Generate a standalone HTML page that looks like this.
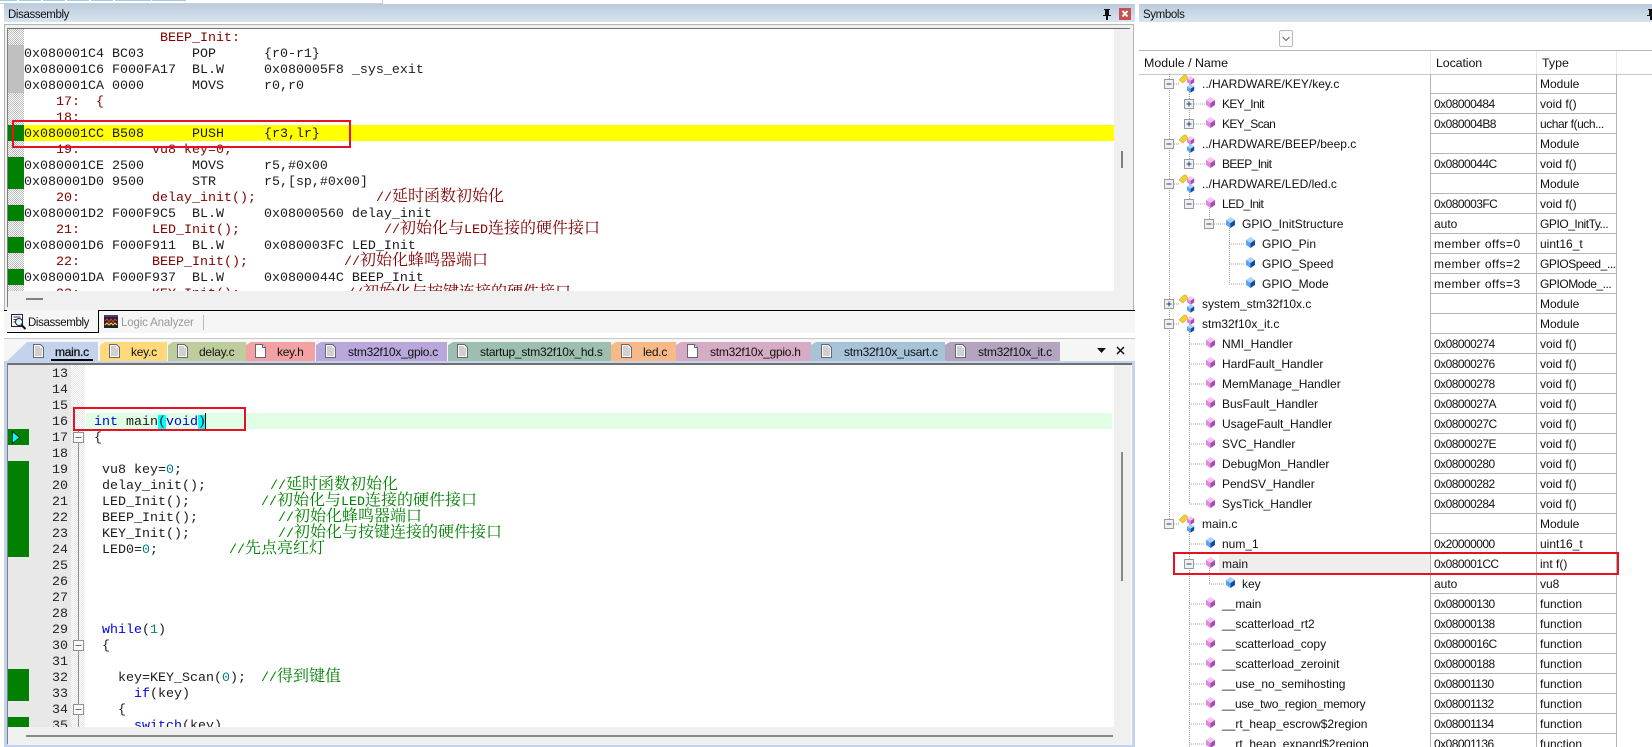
<!DOCTYPE html>
<html><head><meta charset="utf-8"><style>
html,body{margin:0;padding:0;background:#fff;width:1652px;height:747px;overflow:hidden}
body{position:relative;font-family:"Liberation Sans","Noto Sans CJK SC",sans-serif;color:#000}
.a{position:absolute}
.tb{background:linear-gradient(#bccbdb,#d7e4f0);height:18px;top:4px;font-size:11.5px;line-height:22px;letter-spacing:-.38px;color:#111;overflow:hidden}
.d,.e{font-family:"Liberation Mono","Noto Serif CJK SC",monospace;font-size:13.33px}
.d,.e{height:16px;line-height:20px;white-space:pre;position:relative;color:#1a1a1a}
.d{padding-left:16px}
.d:before{content:"";position:absolute;left:0;top:0;width:16px;height:16px}
.h:before{background:repeating-conic-gradient(#b8b8b8 0 25%,#fff 0 50%) 0 0/2px 2px}
.s:before{background:#c0c0c0}
.g:before{background:#008000}
.y{background:#ff0}
.d.r0{color:#800000}
.z{position:absolute;top:-2px;margin-left:-1px;font:16px/16px "Noto Serif CJK SC","Liberation Mono",serif}
.z em{font:normal 13.33px/16px "Liberation Mono",monospace}
.e{padding-left:86px}
.e i{position:absolute;left:0;width:60px;text-align:right;font-style:normal;color:#222}
.k{color:#0000e0}.u{color:#008080}.cm{color:#008000}
.cy{background:#0ff}
.tab{position:absolute;top:342px;height:19px;font-size:12px;line-height:20px;letter-spacing:-.25px;color:#111}
.tab span{position:absolute;top:0;white-space:nowrap}
.tab svg{position:absolute;top:2px}
.tree{position:absolute;left:0;top:74px;width:1617px;font-size:12px;color:#111}
.r{position:relative;height:20px}
.r span{position:absolute;top:0;height:19px;line-height:21px;white-space:nowrap}
.n0{left:1202px}.n1{left:1222px}.n2{left:1242px}.n3{left:1262px}
.r .l,.r .t{height:19px;border-bottom:1px solid #b4b4b4;border-left:1px solid #b4b4b4}
.r .l{left:1430px;width:102px;padding-left:3px;letter-spacing:-.55px}
.r .t{left:1536px;width:76px;padding-left:3px;border-right:1px solid #b4b4b4}
.r .w{letter-spacing:0}.r .w2{letter-spacing:.5px}
.r .q{letter-spacing:-.6px}
.r .tt{letter-spacing:-.45px}
.red{position:absolute;border:2px solid #e81123;box-sizing:border-box}
</style></head><body>

<!-- top strip -->
<div class="a" style="left:0;top:0;width:17px;height:1px;background:#9ccbf2"></div>
<div class="a" style="left:19px;top:0;width:22px;height:1px;background:#9ccbf2"></div>
<div class="a" style="left:43px;top:0;width:22px;height:1px;background:#9ccbf2"></div>
<div class="a" style="left:67px;top:0;width:22px;height:1px;background:#9ccbf2"></div>
<div class="a" style="left:91px;top:0;width:22px;height:1px;background:#9ccbf2"></div>
<div class="a" style="left:115px;top:0;width:36px;height:1px;background:#9ccbf2"></div>
<div class="a" style="left:152px;top:0;width:34px;height:1px;background:#9ccbf2"></div>
<div class="a" style="left:0;top:3px;width:382px;height:1px;background:#d0d0d0"></div>
<div class="a" style="left:382px;top:0;width:1px;height:4px;background:#d0d0d0"></div>

<!-- Disassembly panel -->
<div class="a tb" style="left:4px;width:1131px;"><span style="margin-left:4px">Disassembly</span></div>
<svg class="a" style="left:1100px;top:8px" width="36" height="13" viewBox="0 0 36 13"><path d="M4 1h6v1H9v5h2v1H8v4H6V8H3V7h2V2H4z" fill="#111"/><rect x="19" y="0" width="12" height="12" fill="#c75050"/><path d="M22.500 3l5 5.500M27.500 3l-5 5.500" stroke="#fff" stroke-width="2"/></svg>
<div class="a" style="left:4px;top:24px;width:1130px;height:286px;background:#f0f0f0;border:1px solid #b4b4b4;border-bottom:0;box-sizing:border-box"></div>
<div class="a" style="left:8px;top:28px;width:1122px;height:1px;background:#707070"></div>
<div class="a" style="left:7px;top:28px;width:1px;height:279px;background:#808080"></div>
<div class="a" style="left:8px;top:29px;width:1106px;height:262px;background:#fff;overflow:hidden">
<div class="d h r0">                 BEEP_Init:</div>
<div class="d s">0x080001C4 BC03      POP      {r0-r1}</div>
<div class="d s">0x080001C6 F000FA17  BL.W     0x080005F8 _sys_exit</div>
<div class="d s">0x080001CA 0000      MOVS     r0,r0</div>
<div class="d h r0">    17:  {</div>
<div class="d h r0">    18: </div>
<div class="d g y">0x080001CC B508      PUSH     {r3,lr}</div>
<div class="d h r0">    19:         vu8 key=0;</div>
<div class="d g">0x080001CE 2500      MOVS     r5,#0x00</div>
<div class="d g">0x080001D0 9500      STR      r5,[sp,#0x00]</div>
<div class="d h r0">    20:         delay_init();<span class="z" style="left:369px"><em>//</em>延时函数初始化</span></div>
<div class="d g">0x080001D2 F000F9C5  BL.W     0x08000560 delay_init</div>
<div class="d h r0">    21:         LED_Init();<span class="z" style="left:377px"><em>//</em>初始化与<em>LED</em>连接的硬件接口</span></div>
<div class="d g">0x080001D6 F000F911  BL.W     0x080003FC LED_Init</div>
<div class="d h r0">    22:         BEEP_Init();<span class="z" style="left:337px"><em>//</em>初始化蜂鸣器端口</span></div>
<div class="d g">0x080001DA F000F937  BL.W     0x0800044C BEEP_Init</div>
<div class="d h r0">    23:         KEY_Init();<span class="z" style="left:340px"><em>//</em>初始化与按键连接的硬件接口</span></div>
</div>
<div class="a" style="left:1121px;top:151px;width:2px;height:17px;background:#808080"></div>
<div class="a" style="left:26px;top:298px;width:17px;height:2px;background:#808080"></div>
<div class="red" style="left:12px;top:120px;width:339px;height:28px"></div>

<!-- disassembly tabs -->
<div class="a" style="left:4px;top:310px;width:1131px;height:23px;background:#f6f6f6"></div>
<div class="a" style="left:98px;top:310px;width:1037px;height:1px;background:#000"></div>
<div class="a" style="left:4px;top:310px;width:3px;height:1px;background:#000"></div>
<div class="a" style="left:7px;top:332px;width:92px;height:1px;background:#000"></div>
<div class="a" style="left:98px;top:310px;width:1px;height:23px;background:#000"></div>
<svg class="a" style="left:10px;top:314px" width="17" height="17" viewBox="0 0 17 17"><rect x="1.500" y=".5" width="11" height="12" fill="#fff" stroke="#223"/><path d="M3.500 3h7M3.500 5.500h4M3.500 8h5" stroke="#336" stroke-width="1"/><circle cx="9" cy="8" r="3.500" fill="#dff" stroke="#223"/><path d="M11.500 11l4 4" stroke="#111" stroke-width="2"/></svg>
<div class="a" style="left:28px;top:316px;font-size:11.5px;line-height:14px;letter-spacing:-.38px;color:#111">Disassembly</div>
<svg class="a" style="left:104px;top:315px" width="14" height="13" viewBox="0 0 14 13"><rect width="14" height="13" fill="#223"/><rect x="0" y="0" width="14" height="2" fill="#446"/><path d="M1 6l2-2 2 3 2-3 2 3 2-3 2 2" stroke="#f33" fill="none"/><path d="M1 10l2-2 2 2 2-2 2 2 2-2 2 2" stroke="#fd2" fill="none"/></svg>
<div class="a" style="left:121px;top:316px;font-size:11.5px;line-height:14px;letter-spacing:-.15px;color:#999">Logic Analyzer</div>
<div class="a" style="left:203px;top:315px;width:1px;height:15px;background:#bbb"></div>

<!-- Editor frame -->
<div class="a" style="left:4px;top:338px;width:1131px;height:409px;background:#f6f6f6;border-top:1px solid #c8c8c8;box-sizing:border-box"></div>
<div class="a" style="left:4px;top:361px;width:1131px;height:386px;background:#c3d3ee"></div>
<div class="a" style="left:7px;top:363px;width:1125px;height:2px;background:#707070"></div>
<div class="a" style="left:7px;top:363px;width:1px;height:381px;background:#808080"></div>
<div class="a" style="left:8px;top:365px;width:1124px;height:380px;background:#f0f0f0"></div>
<div class="a" style="left:1131px;top:365px;width:1px;height:380px;background:#fff"></div>

<div class="tab" style="left:7px;width:91px;background:#c3d3ee;clip-path:polygon(0 100%,20px 0,100% 0,100% 100%)"><svg style="left:26px" width="12" height="14"><use href="#doc"/></svg><span style="left:48px;-webkit-text-stroke:.3px #111">main.c</span></div>
<div class="a" style="left:51px;top:359px;width:42px;height:2px;background:#000"></div>
<div class="tab" style="left:100px;width:67px;background:#ffd97a;clip-path:polygon(0 100%,0 3px,5px 0,100% 0,100% 100%)"><svg style="left:9px" width="12" height="14"><use href="#doc"/></svg><span style="left:31px">key.c</span></div>
<div class="tab" style="left:168px;width:78px;background:#bdcd9e;clip-path:polygon(0 100%,0 3px,5px 0,100% 0,100% 100%)"><svg style="left:9px" width="12" height="14"><use href="#doc"/></svg><span style="left:31px">delay.c</span></div>
<div class="tab" style="left:246px;width:69px;background:#f2a2a2;clip-path:polygon(0 100%,0 3px,5px 0,100% 0,100% 100%)"><svg style="left:9px" width="12" height="14"><use href="#doc2"/></svg><span style="left:31px">key.h</span></div>
<div class="tab" style="left:316px;width:131px;background:#b8a8dc;clip-path:polygon(0 100%,0 3px,5px 0,100% 0,100% 100%)"><svg style="left:9px" width="12" height="14"><use href="#doc"/></svg><span style="left:32px">stm32f10x_gpio.c</span></div>
<div class="tab" style="left:448px;width:163px;background:#9dbfb0;clip-path:polygon(0 100%,0 3px,5px 0,100% 0,100% 100%)"><svg style="left:9px" width="12" height="14"><use href="#doc"/></svg><span style="left:32px">startup_stm32f10x_hd.s</span></div>
<div class="tab" style="left:611px;width:65px;background:#f7b987;clip-path:polygon(0 100%,0 3px,5px 0,100% 0,100% 100%)"><svg style="left:10px" width="12" height="14"><use href="#doc"/></svg><span style="left:32px">led.c</span></div>
<div class="tab" style="left:676px;width:135px;background:#d6abc4;clip-path:polygon(0 100%,0 3px,5px 0,100% 0,100% 100%)"><svg style="left:11px" width="12" height="14"><use href="#doc2"/></svg><span style="left:34px">stm32f10x_gpio.h</span></div>
<div class="tab" style="left:811px;width:134px;background:#a7c3d8;clip-path:polygon(0 100%,0 3px,5px 0,100% 0,100% 100%)"><svg style="left:10px" width="12" height="14"><use href="#doc"/></svg><span style="left:33px">stm32f10x_usart.c</span></div>
<div class="tab" style="left:945px;width:115px;background:#b3a5bf;clip-path:polygon(0 100%,0 3px,5px 0,100% 0,100% 100%)"><svg style="left:10px" width="12" height="14"><use href="#doc"/></svg><span style="left:33px">stm32f10x_it.c</span></div>
<svg class="a" style="left:1097px;top:345px" width="32" height="12" viewBox="0 0 32 12"><path d="M0 3h9l-4.500 5z" fill="#111"/><path d="M20 2l7 7M27 2l-7 7" stroke="#111" stroke-width="1.500"/></svg>

<!-- Editor content -->
<div class="a" style="left:8px;top:365px;width:1106px;height:362px;background:#fff;overflow:hidden">
<div class="a" style="left:0;top:0;width:63px;height:362px;background:#e8e8e8"></div>
<div class="a" style="left:63px;top:0;width:14px;height:362px;background:repeating-conic-gradient(#e6e6e6 0 25%,#fff 0 50%) 0 0/2px 2px"></div>
<div class="a" style="left:0;top:64px;width:21px;height:16px;background:#008000"></div>
<div class="a" style="left:0;top:96px;width:21px;height:96px;background:#008000"></div>
<div class="a" style="left:0;top:304px;width:21px;height:32px;background:#008000"></div>
<div class="a" style="left:0;top:352px;width:21px;height:10px;background:#008000"></div>
<div class="a" style="left:78px;top:48px;width:1026px;height:16px;background:#e0ffe4"></div>
<div class="a" style="left:70px;top:64px;width:1px;height:298px;background:#909090"></div>
<svg class="a" style="left:4px;top:66px" width="9" height="13" viewBox="0 0 9 13"><path d="M.5.5v12L7.500 6.500z" fill="#0ff" stroke="#002" stroke-width=".7"/></svg>
<svg class="a" style="left:65px;top:67px" width="11" height="11"><use href="#fold"/></svg>
<svg class="a" style="left:65px;top:275px" width="11" height="11"><use href="#fold"/></svg>
<svg class="a" style="left:65px;top:339px" width="11" height="11"><use href="#fold"/></svg>
<div class="a" style="left:0;top:0;width:1106px">
<div class="e"><i>13</i></div>
<div class="e"><i>14</i></div>
<div class="e"><i>15</i></div>
<div class="e"><i>16</i><span class="k">int</span> main<span class="cy">(</span><span class="k">void</span><span class="cy">)</span></div>
<div class="e"><i>17</i>{</div>
<div class="e"><i>18</i></div>
<div class="e"><i>19</i> vu8 key=<span class="u">0</span>;</div>
<div class="e"><i>20</i> delay_init();<span class="z cm" style="left:263px"><em>//</em>延时函数初始化</span></div>
<div class="e"><i>21</i> LED_Init();<span class="z cm" style="left:254px"><em>//</em>初始化与<em>LED</em>连接的硬件接口</span></div>
<div class="e"><i>22</i> BEEP_Init();<span class="z cm" style="left:271px"><em>//</em>初始化蜂鸣器端口</span></div>
<div class="e"><i>23</i> KEY_Init();<span class="z cm" style="left:271px"><em>//</em>初始化与按键连接的硬件接口</span></div>
<div class="e"><i>24</i> LED0=<span class="u">0</span>;<span class="z cm" style="left:222px"><em>//</em>先点亮红灯</span></div>
<div class="e"><i>25</i></div>
<div class="e"><i>26</i></div>
<div class="e"><i>27</i></div>
<div class="e"><i>28</i></div>
<div class="e"><i>29</i> <span class="k">while</span>(<span class="u">1</span>)</div>
<div class="e"><i>30</i> {</div>
<div class="e"><i>31</i></div>
<div class="e"><i>32</i>   key=KEY_Scan(<span class="u">0</span>);<span class="z cm" style="left:254px"><em>//</em>得到键值</span></div>
<div class="e"><i>33</i>     <span class="k">if</span>(key)</div>
<div class="e"><i>34</i>   {</div>
<div class="e"><i>35</i>     <span class="k">switch</span>(key)</div>
</div>
<div class="a" style="left:197px;top:48px;width:1px;height:16px;background:#000"></div>
</div>
<div class="a" style="left:1121px;top:452px;width:2px;height:129px;background:#888"></div>
<div class="a" style="left:26px;top:735px;width:1087px;height:2px;background:#888"></div>
<div class="red" style="left:73px;top:407px;width:173px;height:24px"></div>

<!-- Symbols panel -->
<div class="a tb" style="left:1139px;width:513px;"><span style="margin-left:4px">Symbols</span></div>
<svg class="a" style="left:1647px;top:8px" width="5" height="13"><path d="M1 1h4v11H3V8H0V7h2V2H1z" fill="#111"/></svg>
<svg class="a" style="left:1279px;top:30px" width="14" height="17" viewBox="0 0 14 17"><rect x=".5" y=".5" width="13" height="16" rx="1.500" fill="#fafafa" stroke="#b8b8b8"/><path d="M3.500 7l3.500 3.500L10.500 7" fill="none" stroke="#666"/></svg>
<div class="a" style="left:1139px;top:50px;width:513px;height:1px;background:#b8b8b8"></div>
<div class="a" style="left:1139px;top:74px;width:513px;height:1px;background:#c8c8c8"></div>
<div class="a" style="left:1430px;top:51px;width:1px;height:23px;background:#e8e8e8"></div>
<div class="a" style="left:1536px;top:51px;width:1px;height:23px;background:#e8e8e8"></div>
<div class="a" style="left:1616px;top:51px;width:1px;height:23px;background:#e8e8e8"></div>
<div class="a" style="left:1144px;top:55px;font-size:12.4px;line-height:16px;color:#111">Module / Name</div>
<div class="a" style="left:1436px;top:55px;font-size:12.4px;line-height:16px;letter-spacing:-.1px;color:#111">Location</div>
<div class="a" style="left:1542px;top:55px;font-size:12.4px;line-height:16px;color:#111">Type</div>

<div class="a" style="left:1219px;top:554px;width:211px;height:20px;background:#eee"></div>

<div class="tree">
<div class="r"><span class="n0">../HARDWARE/KEY/key.c</span><span class="l"></span><span class="t">Module</span></div>
<div class="r"><span class="n1 q">KEY_Init</span><span class="l">0x08000484</span><span class="t">void f()</span></div>
<div class="r"><span class="n1 q">KEY_Scan</span><span class="l">0x080004B8</span><span class="t tt">uchar f(uch...</span></div>
<div class="r"><span class="n0">../HARDWARE/BEEP/beep.c</span><span class="l"></span><span class="t">Module</span></div>
<div class="r"><span class="n1 q">BEEP_Init</span><span class="l">0x0800044C</span><span class="t">void f()</span></div>
<div class="r"><span class="n0">../HARDWARE/LED/led.c</span><span class="l"></span><span class="t">Module</span></div>
<div class="r"><span class="n1 q">LED_Init</span><span class="l">0x080003FC</span><span class="t">void f()</span></div>
<div class="r"><span class="n2">GPIO_InitStructure</span><span class="l w">auto</span><span class="t tt">GPIO_InitTy...</span></div>
<div class="r"><span class="n3">GPIO_Pin</span><span class="l w2">member offs=0</span><span class="t">uint16_t</span></div>
<div class="r"><span class="n3">GPIO_Speed</span><span class="l w2">member offs=2</span><span class="t tt">GPIOSpeed_...</span></div>
<div class="r"><span class="n3">GPIO_Mode</span><span class="l w2">member offs=3</span><span class="t tt">GPIOMode_...</span></div>
<div class="r"><span class="n0">system_stm32f10x.c</span><span class="l"></span><span class="t">Module</span></div>
<div class="r"><span class="n0">stm32f10x_it.c</span><span class="l"></span><span class="t">Module</span></div>
<div class="r"><span class="n1">NMI_Handler</span><span class="l">0x08000274</span><span class="t">void f()</span></div>
<div class="r"><span class="n1">HardFault_Handler</span><span class="l">0x08000276</span><span class="t">void f()</span></div>
<div class="r"><span class="n1">MemManage_Handler</span><span class="l">0x08000278</span><span class="t">void f()</span></div>
<div class="r"><span class="n1">BusFault_Handler</span><span class="l">0x0800027A</span><span class="t">void f()</span></div>
<div class="r"><span class="n1">UsageFault_Handler</span><span class="l">0x0800027C</span><span class="t">void f()</span></div>
<div class="r"><span class="n1">SVC_Handler</span><span class="l">0x0800027E</span><span class="t">void f()</span></div>
<div class="r"><span class="n1">DebugMon_Handler</span><span class="l">0x08000280</span><span class="t">void f()</span></div>
<div class="r"><span class="n1">PendSV_Handler</span><span class="l">0x08000282</span><span class="t">void f()</span></div>
<div class="r"><span class="n1">SysTick_Handler</span><span class="l">0x08000284</span><span class="t">void f()</span></div>
<div class="r"><span class="n0">main.c</span><span class="l"></span><span class="t">Module</span></div>
<div class="r"><span class="n1">num_1</span><span class="l">0x20000000</span><span class="t">uint16_t</span></div>
<div class="r"><span class="n1">main</span><span class="l">0x080001CC</span><span class="t">int f()</span></div>
<div class="r"><span class="n2">key</span><span class="l w">auto</span><span class="t">vu8</span></div>
<div class="r"><span class="n1">__main</span><span class="l">0x08000130</span><span class="t">function</span></div>
<div class="r"><span class="n1">__scatterload_rt2</span><span class="l">0x08000138</span><span class="t">function</span></div>
<div class="r"><span class="n1">__scatterload_copy</span><span class="l">0x0800016C</span><span class="t">function</span></div>
<div class="r"><span class="n1">__scatterload_zeroinit</span><span class="l">0x08000188</span><span class="t">function</span></div>
<div class="r"><span class="n1">__use_no_semihosting</span><span class="l">0x08001130</span><span class="t">function</span></div>
<div class="r"><span class="n1" style="letter-spacing:-.2px">__use_two_region_memory</span><span class="l">0x08001132</span><span class="t">function</span></div>
<div class="r"><span class="n1">__rt_heap_escrow$2region</span><span class="l">0x08001134</span><span class="t">function</span></div>
<div class="r"><span class="n1">__rt_heap_expand$2region</span><span class="l">0x08001136</span><span class="t">function</span></div>
</div>

<!-- tree icons -->
<svg class="a" style="left:0;top:0;pointer-events:none" width="1652" height="747" viewBox="0 0 1652 747">
<defs>
<g id="p"><path d="M0 3L4.500 0 9 3 4.500 6z" fill="#f8c4f4"/><path d="M0 3L4.500 6V11L0 8z" fill="#e088e0"/><path d="M9 3L4.500 6V11L9 8z" fill="#a04cb0"/></g>
<g id="bl"><path d="M0 3L4.500 0 9 3 4.500 6z" fill="#a8d4ff"/><path d="M0 3L4.500 6V11L0 8z" fill="#5aa4ee"/><path d="M9 3L4.500 6V11L9 8z" fill="#164a9c"/></g>
<g id="m"><path d="M0 6L5 1h2l2 3-5 5z" fill="#f5d028" stroke="#b89510" stroke-width=".5"/><use href="#p" transform="translate(8,2) scale(.8)"/><use href="#bl" transform="translate(8,10) scale(.8)"/></g>
<g id="bm"><rect x=".5" y=".5" width="9" height="9" fill="#f0f0f0" stroke="#9a9a9a"/><path d="M2.500 5h5" stroke="#204080"/></g>
<g id="bp"><rect x=".5" y=".5" width="9" height="9" fill="#f0f0f0" stroke="#9a9a9a"/><path d="M2.500 5h5M5 2.500v5" stroke="#204080"/></g>
<g id="doc"><path d="M.5.5h7l3 3v10H.5z" fill="#fff" stroke="#667"/><path d="M2 2h5v2h2v8H2z" fill="#d0d0d0"/></g>
<g id="doc2"><path d="M.5.5h7l3 3v10H.5z" fill="#fff" stroke="#667"/><path d="M7.500 .5v3h3" fill="#e0e0ff" stroke="#667"/></g>
<g id="fold"><rect x=".5" y=".5" width="10" height="10" fill="#fafafa" stroke="#909090"/><path d="M2.500 5.500h6" stroke="#707070"/></g>
</defs>
<path d="M1169.500 74V524M1189.500 84V124M1189.500 144V164M1189.500 184V204M1189.500 324V504M1189.500 524V747M1209.500 204V224M1209.500 564V584M1229.500 224V284
M1174 84h5M1174 144h5M1174 184h5M1174 304h5M1174 324h5M1174 524h5
M1194 104h11M1194 124h11M1194 164h11M1194 204h11M1194 564h11
M1189 344h16M1189 364h16M1189 384h16M1189 404h16M1189 424h16M1189 444h16M1189 464h16M1189 484h16M1189 504h16M1189 544h16M1189 604h16M1189 624h16M1189 644h16M1189 664h16M1189 684h16M1189 704h16M1189 724h16M1189 744h16
M1214 224h11M1209 584h16M1229 244h16M1229 264h16M1229 284h16" stroke="#a0a0a0" stroke-dasharray="1 1" fill="none"/>
<use href="#bm" x="1164" y="79"/><use href="#bm" x="1164" y="139"/><use href="#bm" x="1164" y="179"/><use href="#bp" x="1164" y="299"/><use href="#bm" x="1164" y="319"/><use href="#bm" x="1164" y="519"/>
<use href="#m" x="1179" y="74"/><use href="#m" x="1179" y="134"/><use href="#m" x="1179" y="174"/><use href="#m" x="1179" y="294"/><use href="#m" x="1179" y="314"/><use href="#m" x="1179" y="514"/>
<use href="#bp" x="1184" y="99"/><use href="#bp" x="1184" y="119"/><use href="#bp" x="1184" y="159"/><use href="#bm" x="1184" y="199"/><use href="#bm" x="1184" y="559"/><use href="#bm" x="1204" y="219"/>
<use href="#p" x="1206" y="97"/><use href="#p" x="1206" y="117"/><use href="#p" x="1206" y="157"/><use href="#p" x="1206" y="197"/>
<use href="#bl" x="1226" y="217"/><use href="#bl" x="1246" y="237"/><use href="#bl" x="1246" y="257"/><use href="#bl" x="1246" y="277"/>
<use href="#p" x="1206" y="337"/><use href="#p" x="1206" y="357"/><use href="#p" x="1206" y="377"/><use href="#p" x="1206" y="397"/><use href="#p" x="1206" y="417"/><use href="#p" x="1206" y="437"/><use href="#p" x="1206" y="457"/><use href="#p" x="1206" y="477"/><use href="#p" x="1206" y="497"/>
<use href="#bl" x="1206" y="537"/><use href="#p" x="1206" y="557"/><use href="#bl" x="1226" y="577"/>
<use href="#p" x="1206" y="597"/><use href="#p" x="1206" y="617"/><use href="#p" x="1206" y="637"/><use href="#p" x="1206" y="657"/><use href="#p" x="1206" y="677"/><use href="#p" x="1206" y="697"/><use href="#p" x="1206" y="717"/><use href="#p" x="1206" y="737"/>
</svg>
<div class="red" style="left:1173px;top:552px;width:446px;height:23px"></div>
</body></html>
